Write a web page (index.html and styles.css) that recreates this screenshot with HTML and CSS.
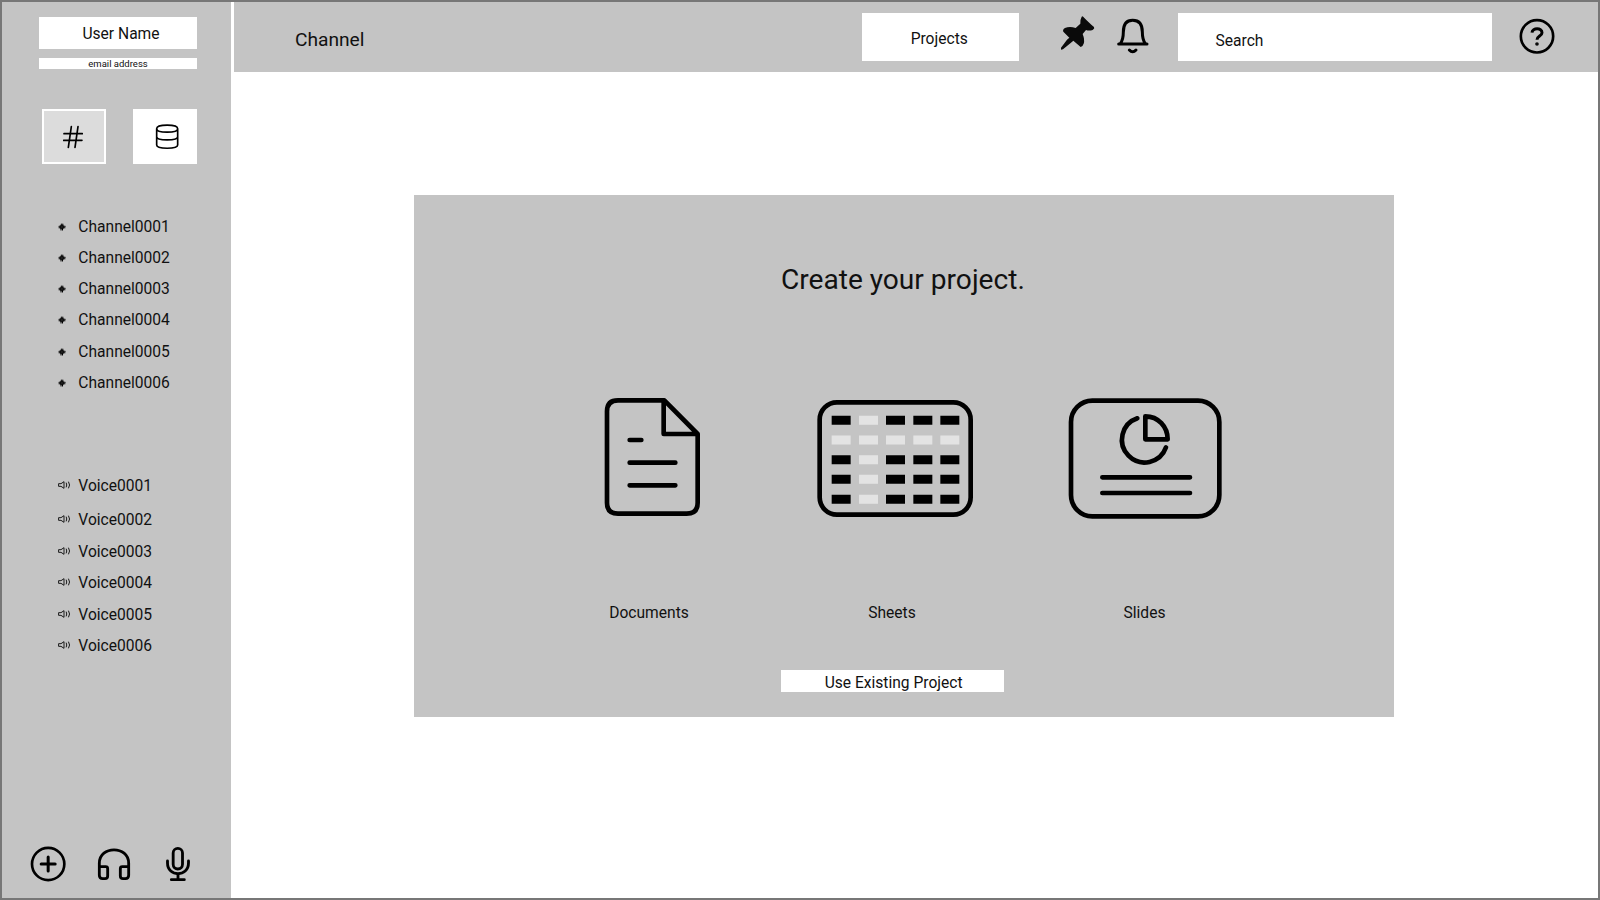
FILE: index.html
```html
<!DOCTYPE html>
<html lang="en">
<head>
<meta charset="utf-8">
<title>Create your project</title>
<link rel="stylesheet" href="styles.css">
</head>
<body>
<svg class="defs" width="0" height="0">
  <symbol id="hash" viewBox="0 0 24 24"><path d="M10 3 9 21M14.5 3 13.500 21M3 10H21.500M3 14H21" stroke-width="3.2"/><path d="M8 8H16V16H8Z" stroke-width="2" fill="#222"/></symbol>
  <symbol id="speaker" viewBox="0 0 39 30"><path d="M3 11H9L18 5V25L9 19H3ZM25 9Q28 15 25 21M32 6Q38 15 32 24" stroke-width="2.6"/></symbol>
</svg>
<div class="app">
  <aside class="sidebar">
    <div class="user-name">User Name</div>
    <div class="email">email address</div>
    <div class="tabs">
      <button class="tab tab-active"><svg width="20" height="24" viewBox="188 374 60 72"><path d="M213 379 204 441M233 379 224 441M191 400H246M190 420H245" stroke-width="5"/></svg></button>
      <button class="tab"><svg width="24" height="26" viewBox="463 371 72 78"><path d="M468 385C468 371 531 371 531 385C531 399 468 399 468 385V434C468 447 531 447 531 434V385M468 409C468 422 531 422 531 409" stroke-width="5"/></svg></button>
    </div>
    <ul class="list channels">
      <li><svg class="hash"><use href="#hash"/></svg>Channel0001</li>
      <li><svg class="hash"><use href="#hash"/></svg>Channel0002</li>
      <li><svg class="hash"><use href="#hash"/></svg>Channel0003</li>
      <li><svg class="hash"><use href="#hash"/></svg>Channel0004</li>
      <li><svg class="hash"><use href="#hash"/></svg>Channel0005</li>
      <li><svg class="hash"><use href="#hash"/></svg>Channel0006</li>
    </ul>
    <ul class="list voices">
      <li class="roomy"><svg class="speaker"><use href="#speaker"/></svg>Voice0001</li>
      <li><svg class="speaker"><use href="#speaker"/></svg>Voice0002</li>
      <li><svg class="speaker"><use href="#speaker"/></svg>Voice0003</li>
      <li class="spaced"><svg class="speaker"><use href="#speaker"/></svg>Voice0004</li>
      <li><svg class="speaker"><use href="#speaker"/></svg>Voice0005</li>
      <li><svg class="speaker"><use href="#speaker"/></svg>Voice0006</li>
    </ul>
    <div class="tools">
      <svg width="36" height="36" viewBox="91 78 108 108"><circle cx="145.500" cy="132" r="48.500" stroke-width="8"/><path d="M145.500 111V153M124.500 132H166.500" stroke-width="9"/></svg>
      <svg width="34" height="36" viewBox="291 78 102 108"><path d="M298 140V130C298 76 386 76 386 130V140M298 140H317Q323 140 323 146V168Q323 176 315 176H308Q298 176 298 166ZM386 140H367Q361 140 361 146V168Q361 176 369 176H376Q386 176 386 166Z" stroke-width="8.500"/></svg>
      <svg width="26" height="36" viewBox="496 78 78 108"><rect x="520.500" y="85" width="28" height="62" rx="14" stroke-width="8.500"/><path d="M503.500 123V129C503.500 172 566.500 172 566.500 129V123M535 162V178M515 179H554" stroke-width="8.500"/></svg>
    </div>
  </aside>
  <div class="content">
    <header class="topbar">
      <div class="room">Channel</div>
      <button class="projects">Projects</button>
      <svg class="pin" width="36" height="36" viewBox="659 46 108 108"><path class="solid" d="M727 50L738 61L753 75L761 82Q764 87 757 91Q746 94 737 91L727 103Q734 121 730 132Q727 141 721 142L699 123L691 130L668 149L662 150V144L680 120L687 114L669 96Q666 90 674 85Q688 79 706 85L720 72Q719 60 724 51Z"/></svg>
      <svg class="bell" width="34" height="38" viewBox="828 50 102 114"><path d="M836 131H921M841 130C849 119 850 112 850 95C850 71 860 60 878 60C896 60 907 71 907 95C907 112 908 119 916 130" stroke-width="9"/><path d="M868 149Q878 160 888 149" stroke-width="9"/></svg>
      <div class="search">Search</div>
      <svg class="help" width="38" height="38" viewBox="1046 50 114 114"><circle cx="1103" cy="108" r="48.500" stroke-width="8"/><path d="M1088 97C1089 81 1118 81 1118 97C1118 107 1103 107 1103 118" stroke-width="9" stroke-linecap="butt"/><circle class="solid" cx="1103" cy="131" r="5.500"/></svg>
    </header>
    <main class="stage">
      <section class="panel">
        <h1>Create your project.</h1>
        <div class="cards">
          <div class="card documents">
            <svg width="100" height="124" viewBox="69 45 300 372"><path d="M253 61H114Q81 61 81 94V368Q81 401 114 401H320Q353 401 353 368V162L253 61ZM251 63V162H351M149 180H184M149 248H286M149 316H286" stroke-width="14"/></svg>
            <span>Documents</span>
          </div>
          <div class="card sheets">
            <svg width="160" height="121" viewBox="45 54 480 363"><rect x="59" y="67" width="453" height="337" rx="52" stroke-width="14"/>
              <path class="cells" d="M95 121H152M258 121H315M340 121H397M421 121H478M95 239H152M258 239H315M340 239H397M421 239H478M95 298H152M258 298H315M340 298H397M421 298H478M95 358H152M258 358H315M340 358H397M421 358H478"/>
              <path class="cells pale" d="M177 121H234M95 180H152M177 180H234M258 180H315M340 180H397M421 180H478M177 239H234M177 298H234M177 358H234"/></svg>
            <span>Sheets</span>
          </div>
          <div class="card slides">
            <svg width="157" height="125" viewBox="51 48 471 375"><rect x="63" y="62" width="445" height="347" rx="64" stroke-width="14"/><path d="M262 115A68 68 0 1 0 348 202M286 109V178H353C353 140 325 109 286 109ZM157 292H420M157 339H420" stroke-width="14"/></svg>
            <span>Slides</span>
          </div>
        </div>
        <button class="existing">Use Existing Project</button>
      </section>
    </main>
  </div>
</div>
</body>
</html>
```

FILE: styles.css
```css
* { box-sizing: border-box; }
body { margin: 0; font-family: Roboto, sans-serif; font-size: 15.6px; color: #111; }
button { border: 0; padding: 0; font: inherit; color: inherit; background: #fff; }
svg { display: block; flex: none; fill: none; stroke: #000; stroke-linecap: round; stroke-linejoin: round; }
.defs { position: absolute; }
.solid { fill: #0a0a0a; stroke: none; }

.app { display: flex; width: 1600px; height: 900px; border: 2px solid #777; background: #fff; overflow: hidden; }

.sidebar { width: 229.4px; background: #c4c4c4; padding: 15px 0 0 37px; display: flex; flex-direction: column; }
.user-name { width: 158px; height: 32px; line-height: 35px; padding-left: 6px; text-align: center; background: #fff; }
.email { width: 158px; height: 11px; margin-top: 9px; line-height: 11.500px; font-size: 9.500px; text-align: center; background: #fff; }
.tabs { display: flex; justify-content: space-between; width: 155px; margin: 40px 0 0 3px; }
.tab { display: flex; align-items: center; justify-content: center; width: 64px; height: 55px; }
.tab-active { background: #dcdcdc; border: 2px solid #fff; padding-right: 3px; }
.tab:last-child { padding-left: 3px; }
.list { list-style: none; margin: 0; padding: 0 0 0 18px; }
.list li { display: flex; align-items: center; height: 31.2px; }
.channels { margin-top: 47.200px; }
.voices { margin-top: 72px; }
.voices .roomy { height: 34.500px; padding-bottom: 3.300px; }
.voices .spaced { height: 32.500px; padding-bottom: 1.300px; }
.hash { width: 8px; height: 8px; margin: 0 12px 0 1.300px; }
.speaker { width: 13px; height: 10px; margin: -2px 7.800px 0 .5px; }
.tools { display: flex; margin: auto 0 16px -8.700px; }
.tools svg + svg { margin-left: 31px; }
.tools svg:last-child { margin-left: 34px; }

.content { flex: 1; margin-left: 3px; display: flex; flex-direction: column; }
.topbar { display: flex; align-items: flex-start; height: 69.700px; padding-top: 10.500px; background: #c4c4c4; }
.room { width: 628px; padding-left: 60.500px; font-size: 19.200px; line-height: 54px; }
.projects { width: 156.700px; height: 48.500px; padding: 5px 3px 0 0; line-height: 43px; }
.pin { margin: 2.800px 0 0 40.700px; }
.bell { margin: 4.200px 0 0 20.300px; }
.search { width: 314px; height: 48.500px; margin-left: 28px; padding-left: 37.500px; line-height: 57px; background: #fff; }
.help { margin: 4.200px 0 0 26px; }

.stage { flex: 1; padding: 123.600px 0 0 179.600px; }
.panel { width: 979.800px; height: 521.500px; background: #c4c4c4; }
h1 { margin: 0; padding: 65px 0 0 367px; font-size: 28.100px; font-weight: 400; line-height: 40px; white-space: nowrap; }
.cards { display: flex; padding: 95px 0 0 189px; height: 328px; }
.card { position: relative; display: grid; grid-template-rows: 206px 24px; justify-items: center; align-items: start; }
.card span { line-height: 24px; }
.documents { width: 100px; }
.documents span { margin-right: 8px; }
.sheets { width: 160px; margin-left: 112px; }
.sheets svg { margin-top: 3px; }
.sheets span { margin-right: 6px; }
.slides { width: 157px; margin-left: 92px; }
.slides svg { margin-top: 1px; }
.slides span { margin-right: 2px; }
.cells { stroke-width: 27; stroke-linecap: butt; }
.pale { stroke: #e3e3e3; }
.existing { display: block; width: 223.700px; height: 22px; margin: 41.700px 0 0 366.800px; padding: 2px 0 0 2px; line-height: 22px; }
```
